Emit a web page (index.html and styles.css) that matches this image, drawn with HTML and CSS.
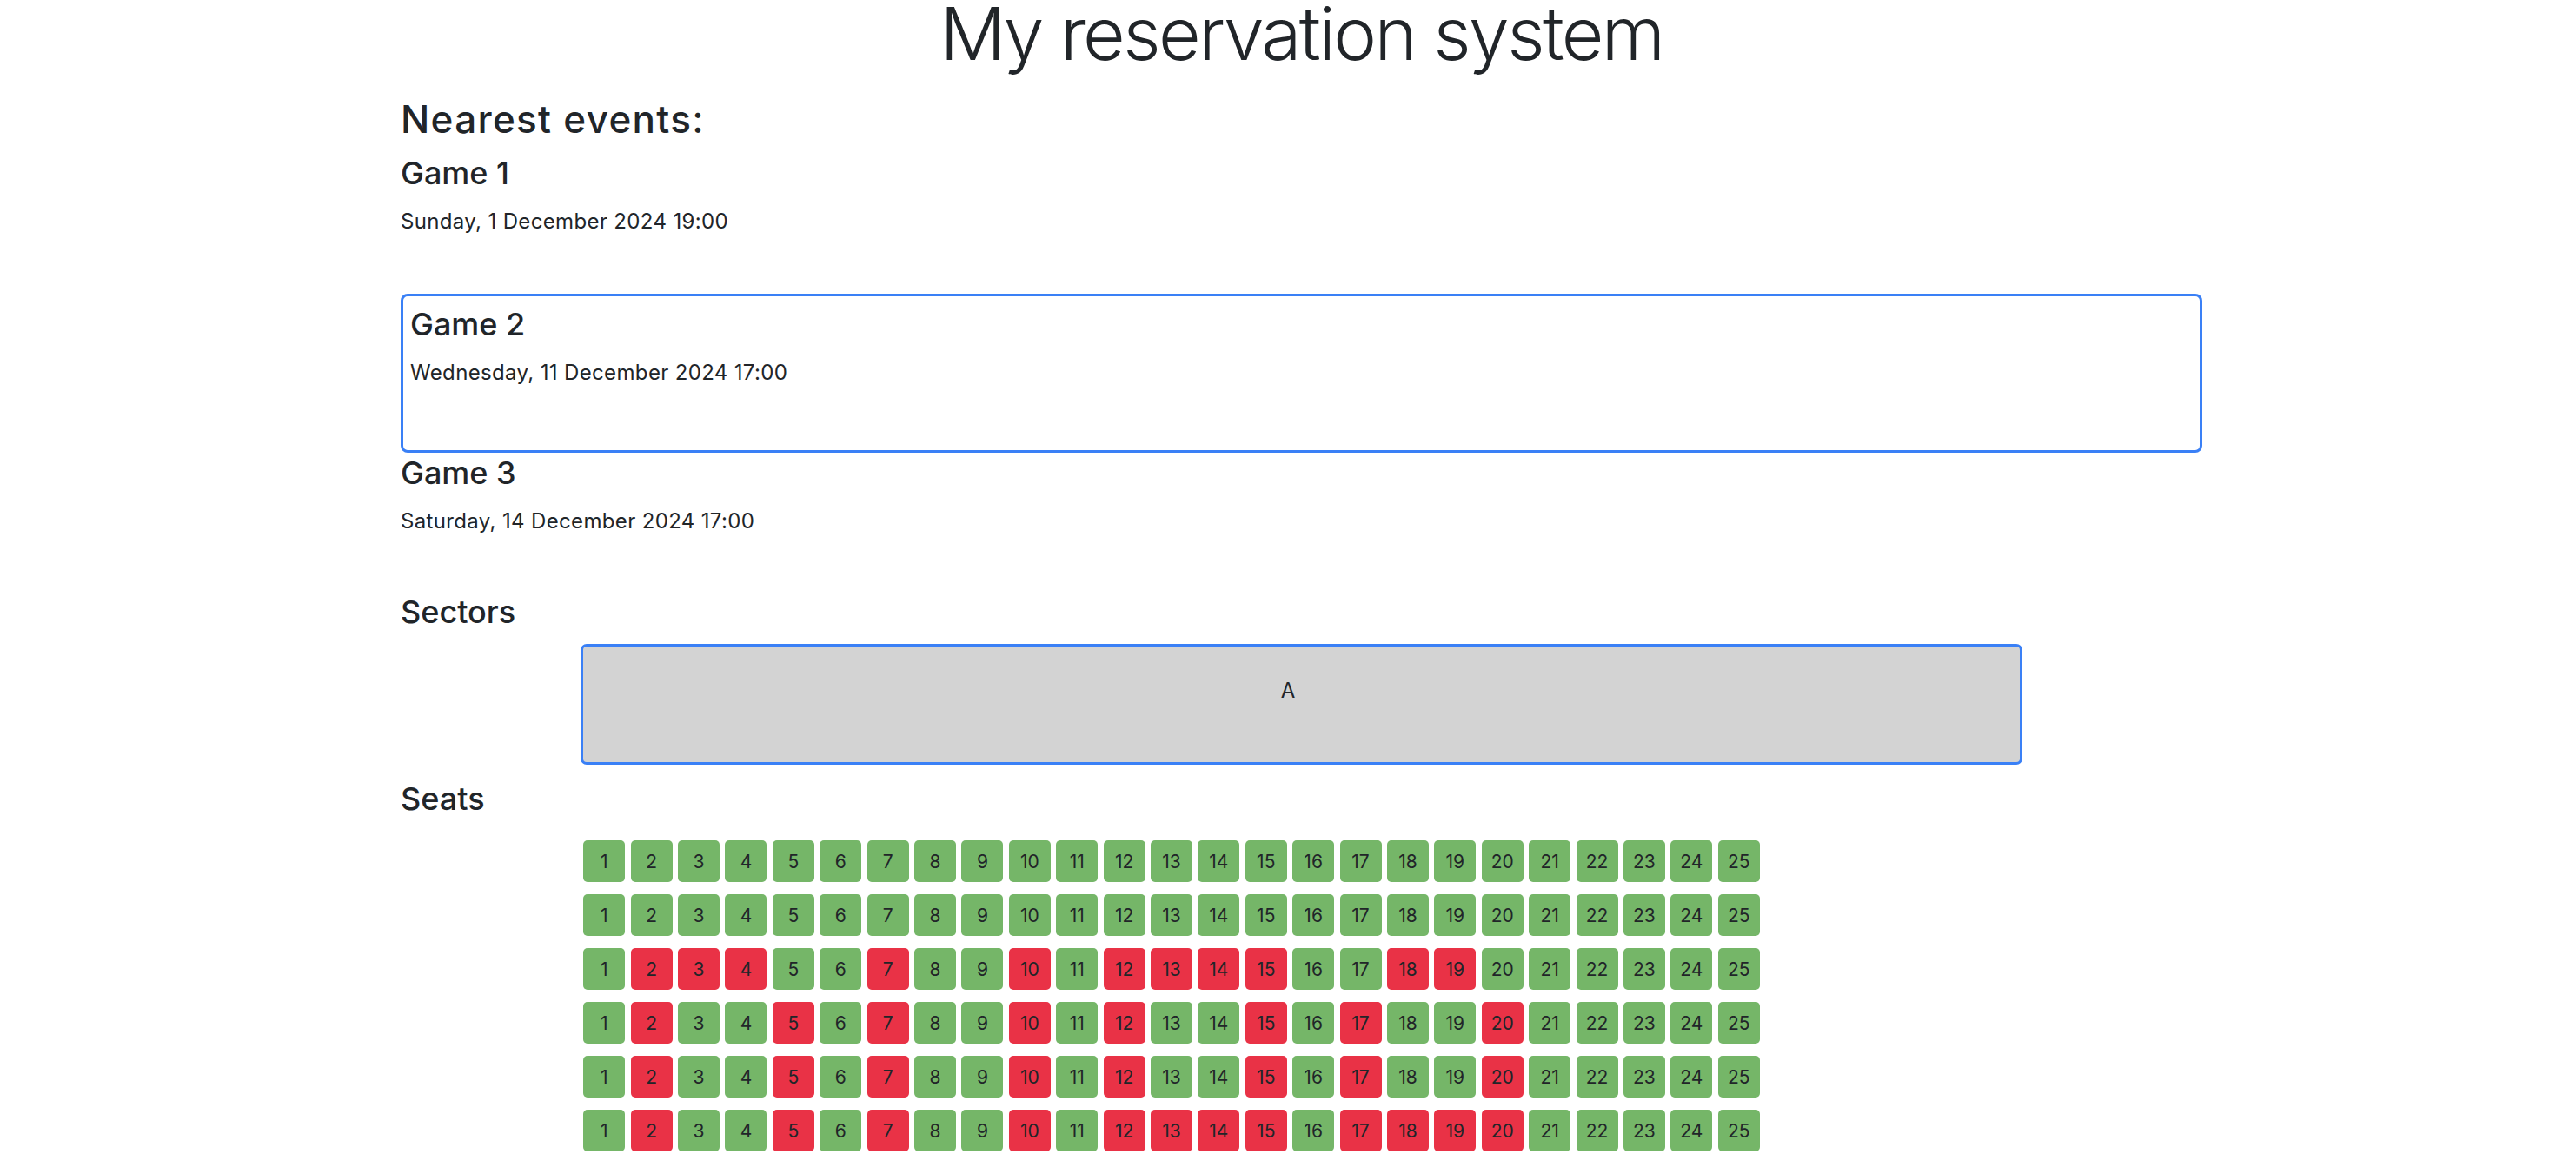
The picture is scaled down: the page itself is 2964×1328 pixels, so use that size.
FILE: index.html
```html
<!DOCTYPE html>
<html lang="en">
<head>
<meta charset="utf-8">
<title>My reservation system</title>
<link rel="stylesheet" href="styles.css">
</head>
<body>
<div class="container">
  <h1 class="title">My reservation system</h1>
  <h3 class="section-title">Nearest events:</h3>
  <div class="events">
    <div class="event">
      <h4 class="event-name">Game 1</h4>
      <p class="event-date">Sunday, 1 December 2024 19:00</p>
    </div>
    <div class="event selected">
      <h4 class="event-name">Game 2</h4>
      <p class="event-date">Wednesday, 11 December 2024 17:00</p>
    </div>
    <div class="event">
      <h4 class="event-name">Game 3</h4>
      <p class="event-date">Saturday, 14 December 2024 17:00</p>
    </div>
  </div>
  <h4 class="sub-title sectors-title">Sectors</h4>
  <div class="sector selected-sector">A</div>
  <h4 class="sub-title seats-title">Seats</h4>
  <div class="seats">
    <div class="seat-row">
      <span class="seat free">1</span><span class="seat free">2</span><span class="seat free">3</span><span class="seat free">4</span><span class="seat free">5</span><span class="seat free">6</span><span class="seat free">7</span><span class="seat free">8</span><span class="seat free">9</span><span class="seat free">10</span><span class="seat free">11</span><span class="seat free">12</span><span class="seat free">13</span><span class="seat free">14</span><span class="seat free">15</span><span class="seat free">16</span><span class="seat free">17</span><span class="seat free">18</span><span class="seat free">19</span><span class="seat free">20</span><span class="seat free">21</span><span class="seat free">22</span><span class="seat free">23</span><span class="seat free">24</span><span class="seat free">25</span>
    </div>
    <div class="seat-row">
      <span class="seat free">1</span><span class="seat free">2</span><span class="seat free">3</span><span class="seat free">4</span><span class="seat free">5</span><span class="seat free">6</span><span class="seat free">7</span><span class="seat free">8</span><span class="seat free">9</span><span class="seat free">10</span><span class="seat free">11</span><span class="seat free">12</span><span class="seat free">13</span><span class="seat free">14</span><span class="seat free">15</span><span class="seat free">16</span><span class="seat free">17</span><span class="seat free">18</span><span class="seat free">19</span><span class="seat free">20</span><span class="seat free">21</span><span class="seat free">22</span><span class="seat free">23</span><span class="seat free">24</span><span class="seat free">25</span>
    </div>
    <div class="seat-row">
      <span class="seat free">1</span><span class="seat taken">2</span><span class="seat taken">3</span><span class="seat taken">4</span><span class="seat free">5</span><span class="seat free">6</span><span class="seat taken">7</span><span class="seat free">8</span><span class="seat free">9</span><span class="seat taken">10</span><span class="seat free">11</span><span class="seat taken">12</span><span class="seat taken">13</span><span class="seat taken">14</span><span class="seat taken">15</span><span class="seat free">16</span><span class="seat free">17</span><span class="seat taken">18</span><span class="seat taken">19</span><span class="seat free">20</span><span class="seat free">21</span><span class="seat free">22</span><span class="seat free">23</span><span class="seat free">24</span><span class="seat free">25</span>
    </div>
    <div class="seat-row">
      <span class="seat free">1</span><span class="seat taken">2</span><span class="seat free">3</span><span class="seat free">4</span><span class="seat taken">5</span><span class="seat free">6</span><span class="seat taken">7</span><span class="seat free">8</span><span class="seat free">9</span><span class="seat taken">10</span><span class="seat free">11</span><span class="seat taken">12</span><span class="seat free">13</span><span class="seat free">14</span><span class="seat taken">15</span><span class="seat free">16</span><span class="seat taken">17</span><span class="seat free">18</span><span class="seat free">19</span><span class="seat taken">20</span><span class="seat free">21</span><span class="seat free">22</span><span class="seat free">23</span><span class="seat free">24</span><span class="seat free">25</span>
    </div>
    <div class="seat-row">
      <span class="seat free">1</span><span class="seat taken">2</span><span class="seat free">3</span><span class="seat free">4</span><span class="seat taken">5</span><span class="seat free">6</span><span class="seat taken">7</span><span class="seat free">8</span><span class="seat free">9</span><span class="seat taken">10</span><span class="seat free">11</span><span class="seat taken">12</span><span class="seat free">13</span><span class="seat free">14</span><span class="seat taken">15</span><span class="seat free">16</span><span class="seat taken">17</span><span class="seat free">18</span><span class="seat free">19</span><span class="seat taken">20</span><span class="seat free">21</span><span class="seat free">22</span><span class="seat free">23</span><span class="seat free">24</span><span class="seat free">25</span>
    </div>
    <div class="seat-row">
      <span class="seat free">1</span><span class="seat taken">2</span><span class="seat free">3</span><span class="seat free">4</span><span class="seat taken">5</span><span class="seat free">6</span><span class="seat taken">7</span><span class="seat free">8</span><span class="seat free">9</span><span class="seat taken">10</span><span class="seat free">11</span><span class="seat taken">12</span><span class="seat taken">13</span><span class="seat taken">14</span><span class="seat taken">15</span><span class="seat free">16</span><span class="seat taken">17</span><span class="seat taken">18</span><span class="seat taken">19</span><span class="seat taken">20</span><span class="seat free">21</span><span class="seat free">22</span><span class="seat free">23</span><span class="seat free">24</span><span class="seat free">25</span>
    </div>
  </div>
</div>
</body>
</html>
```

FILE: styles.css
```css
html, body {
  margin: 0;
  padding: 0;
  background: #ffffff;
}

body {
  font-family: Inter, "Noto Sans", "Liberation Sans", sans-serif;
  color: #212529;
  font-size: 24px;
  line-height: 36px;
  overflow: hidden;
}

.container {
  width: 2073px;
  margin-left: 461px;
}

.title {
  margin: 0 0 34px;
  font-size: 84px;
  line-height: 78px;
  font-weight: 300;
  letter-spacing: -2.6px;
  text-align: center;
}

.section-title {
  margin: 0 0 14px;
  font-size: 44px;
  line-height: 50px;
  font-weight: 500;
  letter-spacing: 1.3px;
}

.event {
  padding-top: 2px;
}

.event-name {
  margin: 0 0 16px;
  font-size: 36px;
  line-height: 43px;
  font-weight: 500;
}

.event-date {
  margin: 0 0 65px;
  font-size: 24px;
  line-height: 36px;
  letter-spacing: 0.35px;
}

.event.selected {
  border: 3px solid #3a80f6;
  border-radius: 8px;
  padding: 11px 8px;
}

.event.selected .event-date {
  margin-bottom: 60px;
}

.sub-title {
  margin: 0;
  font-size: 36px;
  line-height: 43px;
  font-weight: 500;
}

.sectors-title {
  margin: 1px 0 15px;
}

.sector {
  box-sizing: border-box;
  width: 80%;
  height: 139px;
  margin: 0 auto;
  padding: 33px 31px 0 0;
  background: #d3d3d3;
  border: 3px solid #3a80f6;
  border-radius: 7px;
  text-align: center;
  font-size: 24px;
  line-height: 36px;
}

.seats-title {
  margin: 18px 0 26px;
}

.seats {
  width: 80%;
  margin: 0 auto;
  display: flex;
  flex-direction: column;
  gap: 14px;
}

.seat-row {
  display: flex;
  gap: 6.4px;
  padding-left: 3px;
}

.seat {
  width: 48px;
  height: 48px;
  border-radius: 5px;
  display: flex;
  align-items: center;
  justify-content: center;
  font-size: 21px;
  line-height: 1;
  color: #212529;
}

.seat.free {
  background: #75b668;
}

.seat.taken {
  background: #e93246;
}
```
